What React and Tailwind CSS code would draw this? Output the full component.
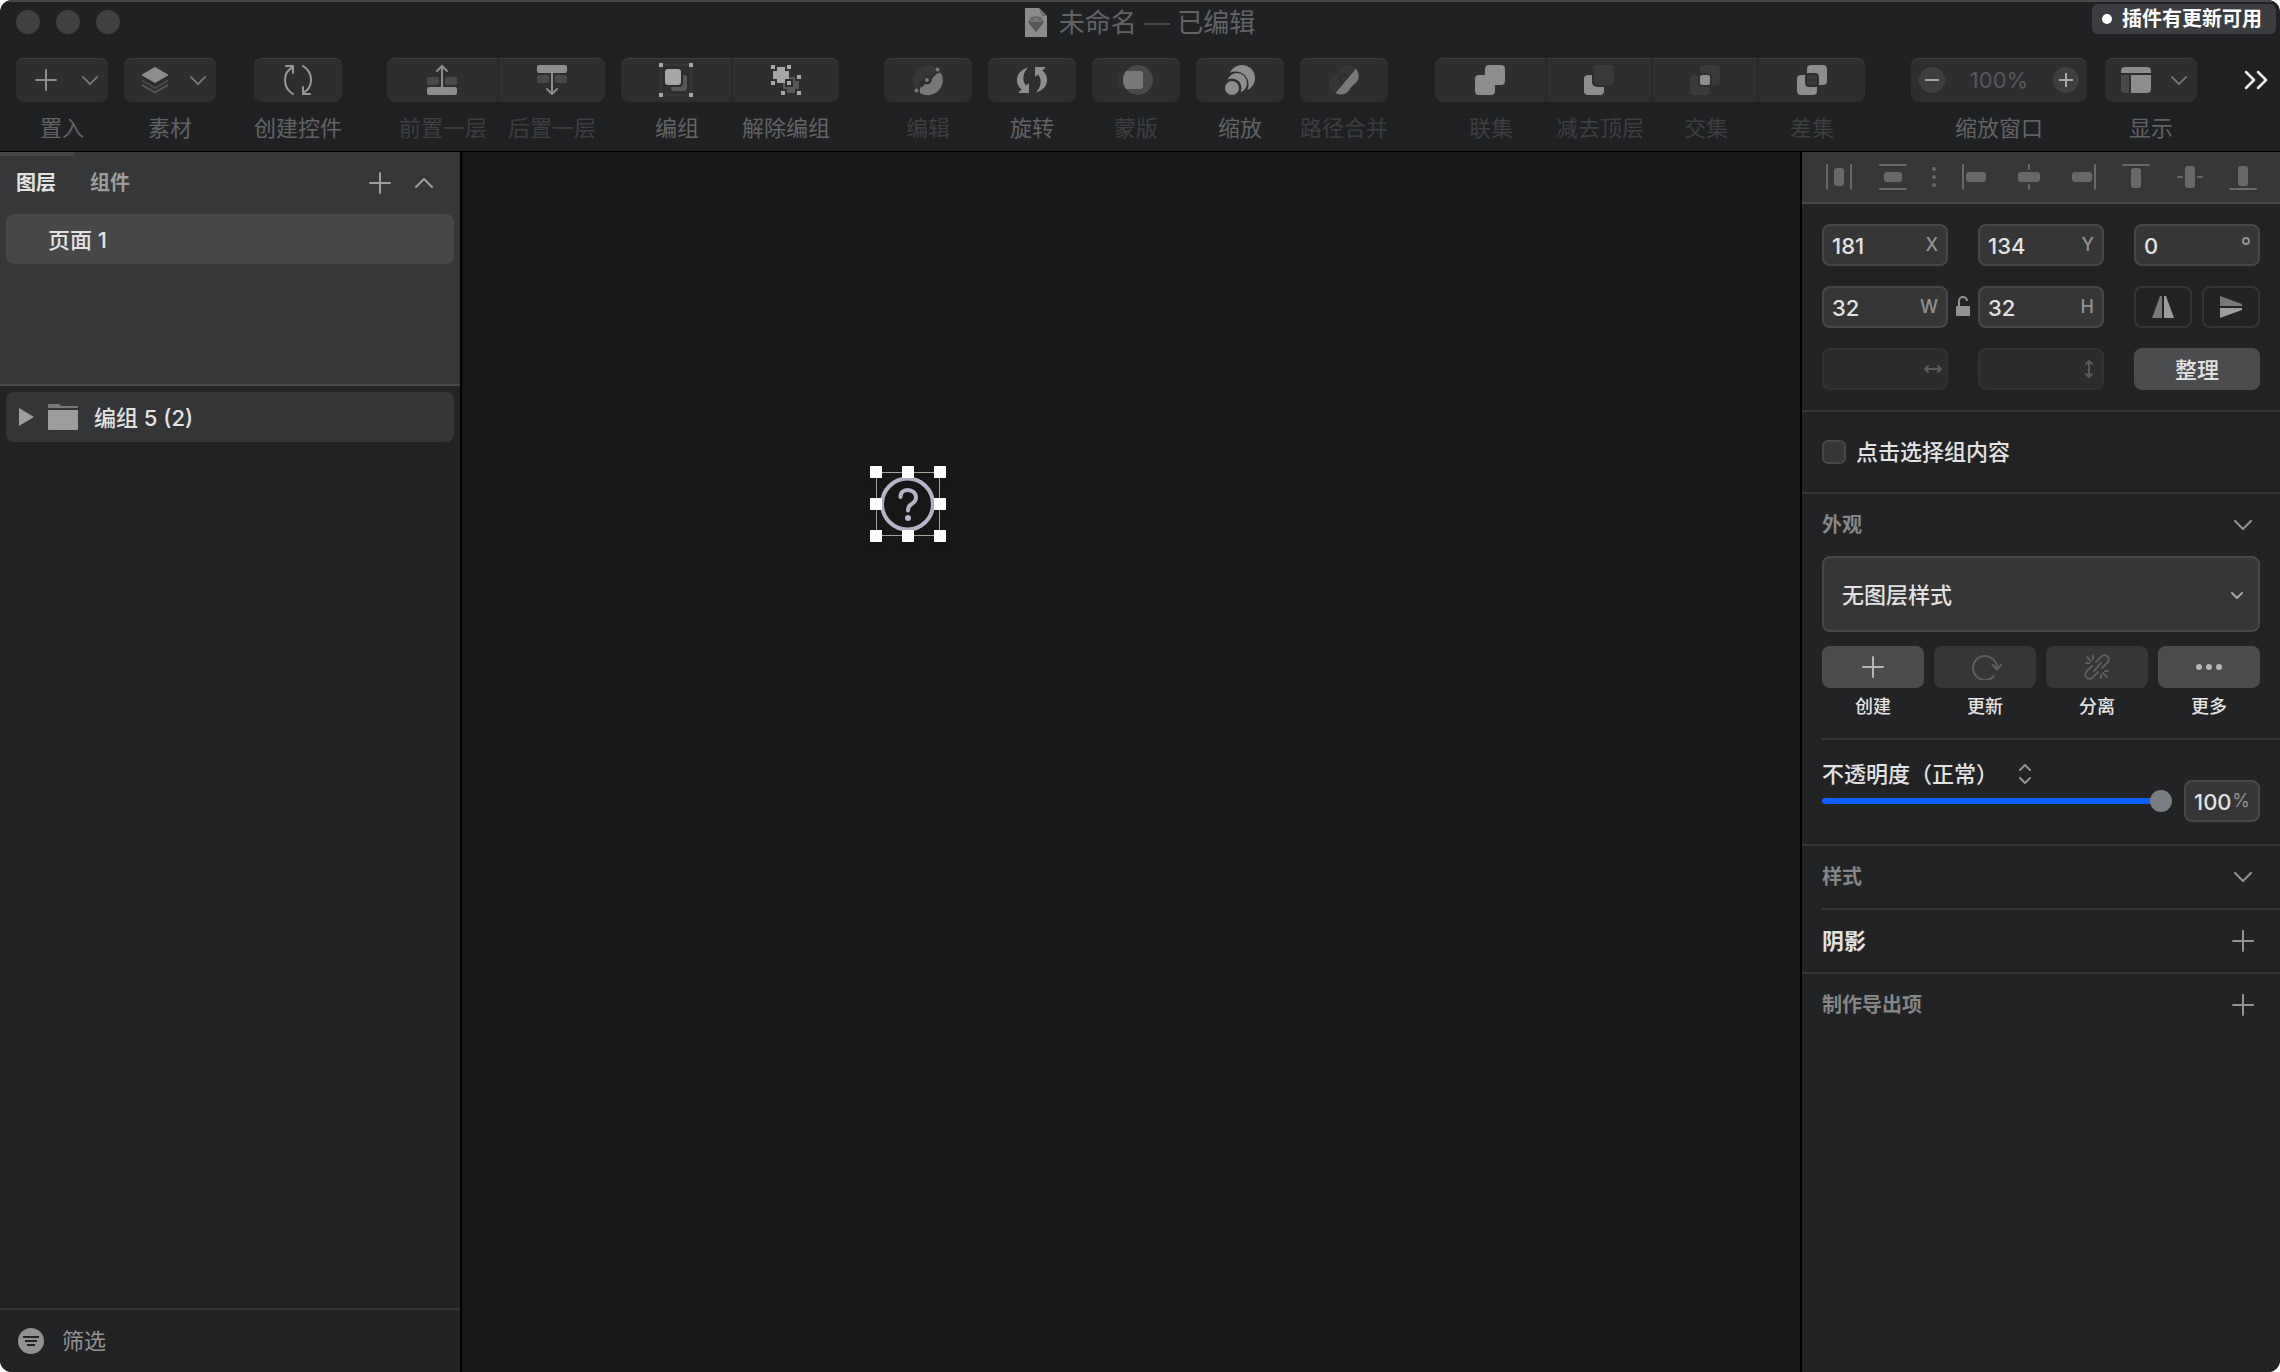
import React from 'react';
import clsx from 'clsx';

const ToolIcon = ({ children, className }) => (
  <svg viewBox="0 0 36 36" className={clsx('size-9 shrink-0', className)} fill="none" aria-hidden="true">
    {children}
  </svg>
);

const Chevron = ({ className, flip = false }) => (
  <svg viewBox="0 0 18 10" className={className} fill="none" stroke="currentColor" strokeWidth="2" strokeLinecap="round" strokeLinejoin="round" aria-hidden="true">
    <path d={flip ? 'M1 9 9 1l8 8' : 'M1 1l8 8 8-8'} />
  </svg>
);

const Plus = ({ className }) => (
  <svg viewBox="0 0 22 22" className={clsx('size-[22px]', className)} stroke="currentColor" strokeWidth="2" strokeLinecap="round" aria-hidden="true">
    <path d="M11 1v20M1 11h20" />
  </svg>
);

const LayersIcon = () => (
  <ToolIcon>
    <path d="M19 5.500 32 13 19 20.500 6 13Z" fill="#8c8d8f" stroke="#8c8d8f" strokeLinejoin="round" />
    <path d="M6 18.500l13 7.500 13-7.500" stroke="#48494b" strokeWidth="1.6" />
    <path d="M6 23l13 7.500L32 23" stroke="#58595b" strokeWidth="1.6" />
  </ToolIcon>
);

const SymbolIcon = () => (
  <ToolIcon>
    <g stroke="#97989a" strokeWidth="2" strokeLinecap="round" strokeLinejoin="round">
      <path d="M6 4h7v7M13 5C7 8 5 13 5 18c0 6 3 11 8 14" />
      <path d="M30 32h-7v-7M23 31c6-3 8-8 8-13 0-6-3-11-8-14" />
    </g>
  </ToolIcon>
);

const ForwardIcon = () => (
  <ToolIcon>
    <rect x="3" y="25" width="30" height="8" rx="2" fill="#8c8d8f" />
    <rect x="3" y="15" width="12" height="8" rx="2" fill="#48494b" />
    <rect x="21" y="15" width="12" height="8" rx="2" fill="#48494b" />
    <path d="M18 26V4M13 9l5-5 5 5" stroke="#8c8d8f" strokeWidth="2" strokeLinecap="round" />
  </ToolIcon>
);

const BackwardIcon = () => (
  <ToolIcon>
    <rect x="3" y="3" width="30" height="8" rx="2" fill="#8c8d8f" />
    <rect x="3" y="13" width="12" height="8" rx="2" fill="#48494b" />
    <rect x="21" y="13" width="12" height="8" rx="2" fill="#48494b" />
    <path d="M18 10v22M13 27l5 5 5-5" stroke="#8c8d8f" strokeWidth="2" strokeLinecap="round" />
  </ToolIcon>
);

const GroupIcon = () => (
  <ToolIcon>
    <rect x="3" y="3" width="30" height="30" stroke="#353638" strokeWidth="2" />
    <path d="M1 1h4v4H1zM31 1h4v4h-4zM1 31h4v4H1zM31 31h4v4h-4z" fill="#a6a7a9" />
    <rect x="13" y="13" width="16" height="16" rx="3" fill="#57585a" />
    <rect x="5" y="5" width="20" height="20" rx="4" fill="#2d2e30" />
    <rect x="7" y="7" width="16" height="16" rx="3" fill="#a6a7a9" />
  </ToolIcon>
);

const UngroupIcon = () => (
  <ToolIcon>
    <path d="M19 15h8v4h4v8h-4v4h-8v-4h-4v-8h4z" fill="#57585a" />
    <path d="M17 17h8v8h-8z" fill="#2d2e30" />
    <path d="M9 5h8v4h4v8h-4v4H9v-4H5V9h4z" fill="#a6a7a9" />
    <path d="M3 3h4v4H3zM19 3h4v4h-4zM3 19h4v4H3zM19 19h4v4h-4z" fill="#a6a7a9" />
    <path d="M29 13h4v4h-4zM13 29h4v4h-4zM29 29h4v4h-4z" fill="#a6a7a9" />
  </ToolIcon>
);

const EditIcon = () => (
  <ToolIcon>
    <circle cx="18" cy="18" r="15" fill="#353638" />
    <path d="M31 11A15 15 0 0 1 10 31V26C12 25 14 24 15 22 19 23 22 21 22 17 23 14 26 11 31 11Z" fill="#77787a" />
    <path d="M27 8c-3 7-7 9-10 10S9 21 7 28" stroke="#2d2e30" strokeWidth="2" />
    <circle cx="17" cy="18" r="4" fill="#2d2e30" />
    <circle cx="27.5" cy="7.5" r="2" fill="#77787a" />
    <circle cx="17" cy="18" r="2" fill="#77787a" />
    <circle cx="6.5" cy="28.5" r="2" fill="#77787a" />
  </ToolIcon>
);

const RotateIcon = () => (
  <ToolIcon>
    <g fill="#8c8d8f">
      <path d="M14 5.500C6 8 3 13 3 18c0 4 1.500 7 4.500 9.500L5 30v1h10V21l-3 2.500C7.500 18 9 11 14 5.500Z" />
      <path d="M14 5.500C6 8 3 13 3 18c0 4 1.500 7 4.500 9.500L5 30v1h10V21l-3 2.500C7.500 18 9 11 14 5.500Z" transform="rotate(180 18 18)" />
    </g>
  </ToolIcon>
);

const MaskIcon = () => (
  <ToolIcon>
    <rect x="1" y="9" width="20" height="18" rx="3" fill="#323335" />
    <circle cx="20" cy="18" r="16" fill="#2d2e30" />
    <circle cx="20" cy="18" r="15" fill="#48494b" />
    <path d="M8 9h14a3 3 0 0 1 3 3v12a3 3 0 0 1-3 3H8c-4-5-4-13 0-18Z" fill="#77787a" />
  </ToolIcon>
);

const ScaleIcon = () => (
  <ToolIcon>
    <circle cx="20" cy="16" r="13" fill="#8c8d8f" />
    <circle cx="13.500" cy="22.500" r="13" fill="#2d2e30" />
    <circle cx="15" cy="21" r="10" fill="#8c8d8f" />
    <circle cx="10" cy="26" r="9.500" fill="#2d2e30" />
    <circle cx="10" cy="26" r="7" fill="#8c8d8f" />
  </ToolIcon>
);

const FlattenIcon = () => (
  <ToolIcon>
    <circle cx="22" cy="14" r="11" fill="#343537" />
    <circle cx="14" cy="22" r="11" fill="#343537" />
    <circle cx="18" cy="17" r="4" stroke="#2b2c2e" strokeWidth="2" />
    <path d="M30 6C35 12 34 19 28 23 25 25 25 27 23 29 19 34 13 34 9 31Z" fill="#77787a" stroke="#2d2e30" />
  </ToolIcon>
);

const UnionIcon = () => (
  <ToolIcon>
    <rect x="13" y="3" width="20" height="20" rx="4" fill="#8c8d8f" />
    <rect x="3" y="13" width="20" height="20" rx="4" fill="#8c8d8f" />
  </ToolIcon>
);

const SubtractIcon = () => (
  <ToolIcon>
    <rect x="3" y="13" width="20" height="20" rx="4" fill="#8c8d8f" />
    <rect x="11" y="1" width="24" height="24" rx="5" fill="#2d2e30" />
    <rect x="13" y="3" width="20" height="20" rx="4" fill="#38393b" />
  </ToolIcon>
);

const IntersectIcon = () => (
  <ToolIcon>
    <rect x="13" y="3" width="20" height="20" rx="4" fill="#38393b" />
    <rect x="3" y="13" width="20" height="20" rx="4" fill="#38393b" />
    <rect x="11" y="11" width="14" height="14" rx="4" fill="#2d2e30" />
    <rect x="13" y="13" width="10" height="10" rx="2" fill="#8c8d8f" />
  </ToolIcon>
);

const DifferenceIcon = () => (
  <ToolIcon>
    <rect x="13" y="3" width="20" height="20" rx="4" fill="#8c8d8f" />
    <rect x="3" y="13" width="20" height="20" rx="4" fill="#8c8d8f" />
    <rect x="11" y="11" width="14" height="14" rx="4" fill="#2d2e30" />
    <rect x="13" y="13" width="10" height="10" rx="3" fill="#38393b" />
  </ToolIcon>
);

const DisplayIcon = () => (
  <ToolIcon>
    <path d="M4 11V9a4 4 0 0 1 4-4h22a4 4 0 0 1 4 4v2Z" fill="#8c8d8f" />
    <path d="M4 13h8v18H8a4 4 0 0 1-4-4Z" fill="#48494b" />
    <path d="M14 13h20v14a4 4 0 0 1-4 4H14Z" fill="#8c8d8f" />
  </ToolIcon>
);

const toolSurface = 'bg-[#2d2e30] shadow-[inset_0_1px_0_#3d3e40]';

const ToolItem = ({ label, icon, dim, menu, className = 'w-[88px]' }) => (
  <div className={clsx('flex flex-col items-center', className)}>
    <button
      type="button"
      aria-label={label}
      className={clsx(
        'flex h-11 w-full items-center rounded-lg',
        toolSurface,
        menu ? 'justify-between pr-2.5 pl-3' : 'justify-center'
      )}
    >
      {icon}
      {menu && <Chevron className="h-[9px] w-4 text-[#77787a]" />}
    </button>
    <span className={clsx('mt-3 text-[22px] leading-7 whitespace-nowrap', dim ? 'text-[#3c3d3f]' : 'text-[#626365]')}>{label}</span>
  </div>
);

const ToolGroup = ({ items, dim, className }) => (
  <div className={clsx('flex', className)}>
    {items.map(({ label, icon }) => (
      <div key={label} className="group flex flex-1 flex-col items-center first:w-[112px] first:flex-none">
        <button
          type="button"
          aria-label={label}
          className={clsx(
            'flex h-11 w-full items-center justify-center border-r-2 border-[#29292b] group-first:rounded-l-lg group-last:rounded-r-lg group-last:border-r-0',
            toolSurface
          )}
        >
          {icon}
        </button>
        <span className={clsx('mt-3 text-[22px] leading-7 whitespace-nowrap', dim ? 'text-[#3c3d3f]' : 'text-[#626365]')}>{label}</span>
      </div>
    ))}
  </div>
);

const orderTools = [
  { label: '前置一层', icon: <ForwardIcon /> },
  { label: '后置一层', icon: <BackwardIcon /> }
];

const groupTools = [
  { label: '编组', icon: <GroupIcon /> },
  { label: '解除编组', icon: <UngroupIcon /> }
];

const booleanTools = [
  { label: '联集', icon: <UnionIcon /> },
  { label: '减去顶层', icon: <SubtractIcon /> },
  { label: '交集', icon: <IntersectIcon /> },
  { label: '差集', icon: <DifferenceIcon /> }
];

const TitleBar = () => (
  <div className="grid h-10 grid-cols-[1fr_auto_1fr] items-center">
    <div className="flex gap-4 pl-4">
      <button type="button" aria-label="关闭" className="size-6 rounded-full bg-[#3f4042]" />
      <button type="button" aria-label="最小化" className="size-6 rounded-full bg-[#3f4042]" />
      <button type="button" aria-label="全屏" className="size-6 rounded-full bg-[#3f4042]" />
    </div>
    <div className="flex items-center gap-3">
      <svg viewBox="0 0 22 30" className="h-[30px] w-[22px]" aria-hidden="true">
        <path d="M0 1h14l8 8v21H0Z" fill="#8b8b8b" />
        <path d="M14 1l8 8h-5z" fill="#6f6f6f" />
        <path d="M6 10l5-1 5 1 3 5-8 10-8-10Z" fill="#6a6a6a" />
        <path d="M3 15h16l-8 10Z" fill="#585858" />
        <path d="M7 15l4-5 4 5Z" fill="#777" />
      </svg>
      <h1 className="pt-0.5 text-[26px] leading-8 text-[#626365]">未命名 <span className="text-[#48494b]">—</span> 已编辑</h1>
    </div>
    <button type="button" className="mt-0.5 mr-1 flex h-[30px] items-center gap-2.5 self-start justify-self-end rounded-md bg-[#3c3d41] pr-3.5 pl-2.5 text-xl font-bold text-white">
      <span className="size-2.5 rounded-full bg-white" />
      插件有更新可用
    </button>
  </div>
);

const Toolbar = () => (
  <div className="flex pt-4 pr-3 pl-4">
    <ToolItem label="置入" menu className="w-[92px]" icon={<span className="flex w-9 justify-center"><Plus className="text-[#8c8d8f]" /></span>} />
    <ToolItem label="素材" menu className="ml-4 w-[92px]" icon={<LayersIcon />} />
    <ToolItem label="创建控件" className="ml-[38px] w-[88px]" icon={<SymbolIcon />} />
    <ToolGroup items={orderTools} dim className="ml-[45px] w-[218px]" />
    <ToolGroup items={groupTools} className="ml-4 w-[218px]" />
    <div className="ml-[45px] flex gap-4">
      <ToolItem label="编辑" dim icon={<EditIcon />} />
      <ToolItem label="旋转" icon={<RotateIcon />} />
      <ToolItem label="蒙版" dim icon={<MaskIcon />} />
      <ToolItem label="缩放" icon={<ScaleIcon />} />
      <ToolItem label="路径合并" dim icon={<FlattenIcon />} />
    </div>
    <ToolGroup items={booleanTools} dim className="ml-[47px] w-[430px]" />
    <div className="ml-[46px] flex w-44 flex-col items-center">
      <div className={clsx('flex h-11 w-full items-center justify-between rounded-lg px-2', toolSurface)}>
        <button type="button" aria-label="缩小" className="flex size-[26px] items-center justify-center rounded-full bg-[#3e3f41]">
          <span className="h-0.5 w-3.5 bg-[#a6a7a9]" />
        </button>
        <span className="text-[22px] text-[#58595b]">100%</span>
        <button type="button" aria-label="放大" className="flex size-[26px] items-center justify-center rounded-full bg-[#3e3f41]">
          <svg viewBox="0 0 14 14" className="size-3.5" stroke="#a6a7a9" strokeWidth="2" aria-hidden="true">
            <path d="M7 0v14M0 7h14" />
          </svg>
        </button>
      </div>
      <span className="mt-3 text-[22px] leading-7 text-[#626365]">缩放窗口</span>
    </div>
    <ToolItem label="显示" menu className="ml-[18px] w-[92px]" icon={<DisplayIcon />} />
    <button type="button" aria-label="更多工具" className="ml-auto flex h-11 items-center">
      <svg viewBox="0 0 24 20" className="h-5 w-6" fill="none" stroke="#f0f0f0" strokeWidth="2.500" strokeLinecap="round" strokeLinejoin="round" aria-hidden="true">
        <path d="M2 2l8 8-8 8M14 2l8 8-8 8" />
      </svg>
    </button>
  </div>
);

const LayerSidebar = () => (
  <aside className="flex w-[462px] shrink-0 flex-col border-r-2 border-black bg-[#222325]">
    <section className="h-[234px] border-b-2 border-[#48494b] bg-[#363738]">
      <div className="h-1 w-[74px] bg-[#464748]" />
      <div className="mb-1 flex h-[54px] items-center pr-[27px] pl-4 text-xl font-bold">
        <button type="button" className="text-[#e2e2e2]">图层</button>
        <button type="button" className="ml-[34px] text-[#9c9d9d]">组件</button>
        <button type="button" aria-label="添加页面" className="ml-auto text-[#9c9d9d]"><Plus /></button>
        <button type="button" aria-label="收起页面列表" className="ml-6 text-[#9c9d9d]"><Chevron flip className="h-2.5 w-[18px]" /></button>
      </div>
      <button type="button" className="mx-1.5 flex h-[50px] w-[448px] items-center rounded-lg bg-[#464749] pt-0.5 pl-[42px] text-[22px] font-medium text-[#e2e2e2]">
        页面 1
      </button>
    </section>
    <div className="flex-1 px-1.5 pt-1.5">
      <button type="button" className="flex h-[50px] w-full items-center rounded-lg bg-[#343537] pl-3 text-[22px] font-medium text-[#e2e2e2]">
        <svg viewBox="0 0 16 18" className="h-[18px] w-4" fill="#9c9d9d" aria-hidden="true">
          <path d="M1 0l15 9-15 9Z" />
        </svg>
        <svg viewBox="0 0 30 26" className="ml-3.5 h-[26px] w-[30px]" aria-hidden="true">
          <path d="M0 4V1a1 1 0 0 1 1-1h10l2 2h16a1 1 0 0 1 1 1v1Z" fill="#77787a" />
          <path d="M0 6h30v19a1 1 0 0 1-1 1H1a1 1 0 0 1-1-1Z" fill="#9c9d9d" />
        </svg>
        <span className="ml-4 pt-0.5">编组 5 (2)</span>
      </button>
    </div>
    <label className="flex h-16 items-center gap-[18px] border-t-2 border-[#343537] pl-[18px]">
      <svg viewBox="0 0 26 26" className="size-[26px]" aria-hidden="true">
        <circle cx="13" cy="13" r="13" fill="#929292" />
        <path d="M5 9h16M7 13h12M9 17h8" stroke="#222325" strokeWidth="2" />
      </svg>
      <input type="text" aria-label="筛选图层" placeholder="筛选" className="min-w-0 flex-1 bg-transparent text-[22px] text-[#e2e2e2] outline-none placeholder:text-[#929292]" />
    </label>
  </aside>
);

const handles = [[0, 0], [32, 0], [64, 0], [0, 32], [64, 32], [0, 64], [32, 64], [64, 64]];

const Canvas = () => (
  <main className="relative min-w-0 flex-1 bg-[#161817]">
    <svg viewBox="0 0 76 76" className="absolute top-[314px] left-[408px] size-[76px] overflow-visible" fill="none" role="img" aria-label="帮助图标">
      <circle cx="37.500" cy="38" r="25.500" stroke="#b6b4c6" strokeWidth="4" />
      <path d="M30.500 31C30.500 26 34 24 38 24s8 3 8 7.500c0 4-2.500 5.500-5 7-2 1.200-3 2.500-3 6" stroke="#b6b4c6" strokeWidth="4" strokeLinecap="round" />
      <circle cx="38" cy="52" r="3" fill="#b6b4c6" />
      <rect x="6.500" y="6.500" width="63" height="63" stroke="#a3a3a3" />
      {handles.map(([x, y]) => (
        <rect key={`${x}-${y}`} x={x} y={y} width="12" height="12" fill="#fff" className="drop-shadow-sm" />
      ))}
    </svg>
  </main>
);

const alignTools = [
  { label: '水平分布', lines: 'M2 1v24M26 1v24', rect: [9, 4, 10, 18] },
  { label: '垂直分布', lines: 'M1 1h26M1 25h26', rect: [5, 8, 18, 10] },
  { label: '左对齐', lines: 'M1 1v24', rect: [4, 8, 20, 10] },
  { label: '水平居中', lines: 'M14 1v4M14 21v4', rect: [3, 8, 22, 10] },
  { label: '右对齐', lines: 'M26 1v24', rect: [3, 8, 20, 10] },
  { label: '顶对齐', lines: 'M1 1h26', rect: [9, 4, 10, 20] },
  { label: '垂直居中', lines: 'M2 13h4M22 13h4', rect: [9, 2, 10, 22] },
  { label: '底对齐', lines: 'M1 25h26', rect: [9, 2, 10, 20] }
];

const AlignBar = () => (
  <div className="flex h-[52px] items-center justify-between border-b-2 border-[#464748] bg-[#363738] px-[23px]">
    {alignTools.map(({ label, lines, rect: [x, y, w, h] }, i) => (
      <React.Fragment key={label}>
        <button type="button" aria-label={label}>
          <svg viewBox="0 0 28 26" className="block h-[26px] w-7" aria-hidden="true">
            <path d={lines} stroke="#676868" strokeWidth="2" strokeLinecap="round" />
            <rect x={x} y={y} width={w} height={h} rx="3" fill="#676868" />
          </svg>
        </button>
        {i === 1 && (
          <svg viewBox="0 0 4 20" className="h-5 w-1" fill="#676868" aria-hidden="true">
            <circle cx="2" cy="2" r="2" />
            <circle cx="2" cy="10" r="2" />
            <circle cx="2" cy="18" r="2" />
          </svg>
        )}
      </React.Fragment>
    ))}
  </div>
);

const Field = ({ name, value, suffix, disabled }) => (
  <label
    className={clsx(
      'flex h-[42px] min-w-0 items-center rounded-lg border-2 px-2',
      disabled ? 'border-[#313232] bg-[#2b2c2c]' : 'border-[#474747] bg-[#363636]'
    )}
  >
    <input type="text" aria-label={name} defaultValue={value} disabled={disabled} className="w-0 min-w-0 flex-1 bg-transparent pt-0.5 text-[22px] font-medium text-[#e2e2e2] outline-none" />
    <span className="text-lg font-medium text-[#929292]">{suffix}</span>
  </label>
);

const ArrowSpan = ({ vertical }) => (
  <svg viewBox="0 0 18 18" className={clsx('-mr-1 size-[18px]', vertical && 'rotate-90')} fill="none" stroke="#585959" strokeWidth="2" strokeLinecap="round" strokeLinejoin="round" aria-hidden="true">
    <path d="M1 9h16M4 6 1 9l3 3M14 6l3 3-3 3" />
  </svg>
);

const GeometryPanel = () => (
  <section className="grid grid-cols-3 gap-x-[30px] gap-y-5 border-b-2 border-[#343537] p-5">
    <Field name="X 坐标" value="181" suffix="X" />
    <Field name="Y 坐标" value="134" suffix="Y" />
    <Field name="旋转角度" value="0" suffix={<svg viewBox="0 0 8 18" className="h-[18px] w-2 overflow-visible" fill="none" aria-hidden="true"><circle cx="4" cy="5" r="3" stroke="#929292" strokeWidth="2" /></svg>} />
    <div className="relative grid">
      <Field name="宽度" value="32" suffix="W" />
      <button type="button" aria-label="锁定比例" className="absolute top-2.5 -right-[22px]">
        <svg viewBox="0 0 14 20" className="h-5 w-3.5" fill="none" aria-hidden="true">
          <rect y="10" width="14" height="10" rx="1" fill="#929292" />
          <path d="M3 10V5a4 4 0 0 1 8 0" stroke="#929292" strokeWidth="2" />
        </svg>
      </button>
    </div>
    <Field name="高度" value="32" suffix="H" />
    <div className="grid grid-cols-2 gap-2.5">
      <button type="button" aria-label="水平翻转" className="flex h-[42px] items-center justify-center rounded-lg border-2 border-[#343537]">
        <svg viewBox="0 0 22 22" className="size-[22px]" aria-hidden="true">
          <path d="M10 0v22H0L8 0Z" fill="#77787a" />
          <path d="M12 0v22h10L14 0Z" fill="#9c9d9d" />
        </svg>
      </button>
      <button type="button" aria-label="垂直翻转" className="flex h-[42px] items-center justify-center rounded-lg border-2 border-[#343537]">
        <svg viewBox="0 0 22 22" className="size-[22px]" aria-hidden="true">
          <path d="M0 10h22V8L0 0Z" fill="#77787a" />
          <path d="M0 12h22v2L0 22Z" fill="#9c9d9d" />
        </svg>
      </button>
    </div>
    <Field name="水平间距" disabled suffix={<ArrowSpan />} />
    <Field name="垂直间距" disabled suffix={<ArrowSpan vertical />} />
    <button type="button" className="h-[42px] rounded-lg bg-[#4b4c4e] pt-0.5 text-[22px] font-medium text-[#e2e2e2]">整理</button>
  </section>
);

const styleActions = [
  { label: '创建', icon: <Plus className="text-[#b4b5b6]" /> },
  {
    label: '更新',
    dim: true,
    icon: (
      <svg viewBox="0 0 30 26" className="ml-1 h-[26px] w-[30px]" fill="none" stroke="#5c5d5f" strokeWidth="2" strokeLinecap="round" strokeLinejoin="round" aria-hidden="true">
        <path d="M22 22A12 12 0 1 1 25 15M20.500 11l4.500 4.500 4-4.500" />
      </svg>
    )
  },
  {
    label: '分离',
    dim: true,
    icon: (
      <svg viewBox="0 0 26 26" className="size-[26px]" fill="none" stroke="#5c5d5f" strokeWidth="2" strokeLinecap="round" aria-hidden="true">
        <path d="M12 8 17.500 2.500a4 4 0 0 1 6 6L18 14M14 18 8.500 23.500a4 4 0 0 1-6-6L8 12M10 17l7-8" />
        <path d="M9 2v3M3 3l4 4M2 9h3M17 21v3M19 19l4 4M21 17h3" />
      </svg>
    )
  },
  {
    label: '更多',
    icon: (
      <svg viewBox="0 0 26 6" className="h-1.5 w-[26px]" fill="#b4b5b6" aria-hidden="true">
        <circle cx="3" cy="3" r="3" />
        <circle cx="13" cy="3" r="3" />
        <circle cx="23" cy="3" r="3" />
      </svg>
    )
  }
];

const AppearancePanel = () => (
  <section className="pl-5">
    <div className="flex h-[62px] items-center justify-between pr-7">
      <h2 className="text-xl font-bold text-[#858686]">外观</h2>
      <button type="button" aria-label="收起外观"><Chevron className="h-2.5 w-[18px] text-[#929292]" /></button>
    </div>
    <div className="relative mr-5">
      <select aria-label="图层样式" className="h-[76px] w-full appearance-none rounded-lg border-2 border-[#474747] bg-[#363636] px-[18px] pt-0.5 text-[22px] font-medium text-[#e2e2e2]">
        <option>无图层样式</option>
      </select>
      <svg viewBox="0 0 14 9" className="pointer-events-none absolute top-[35px] right-4 h-[9px] w-3.5" fill="none" stroke="#a6a7a9" strokeWidth="2" strokeLinecap="round" strokeLinejoin="round" aria-hidden="true">
        <path d="M2 2l5 5 5-5" />
      </svg>
    </div>
    <div className="mt-3.5 mr-5 grid grid-cols-4 gap-2.5 pb-[18px]">
      {styleActions.map(({ label, icon, dim }) => (
        <div key={label} className="flex flex-col items-center">
          <button type="button" aria-label={label} disabled={dim} className={clsx('flex h-[42px] w-full items-center justify-center rounded-lg', dim ? 'bg-[#353638]' : 'bg-[#4b4c4e]')}>
            {icon}
          </button>
          <span className="mt-1.5 text-lg leading-[26px] font-medium text-[#e2e2e2]">{label}</span>
        </div>
      ))}
    </div>
    <div className="flex h-[106px] gap-3 border-t-2 border-[#343537] pr-5">
      <div className="flex flex-1 flex-col pt-[18px]">
        <div className="relative self-start">
          <select aria-label="混合模式" className="block h-7 w-[216px] appearance-none bg-transparent text-[22px] font-medium text-[#e2e2e2]">
            <option>不透明度（正常）</option>
          </select>
          <svg viewBox="0 0 14 20" className="pointer-events-none absolute top-1.5 right-1.5 h-5 w-3.5" fill="none" stroke="#929292" strokeWidth="2" strokeLinecap="round" strokeLinejoin="round" aria-hidden="true">
            <path d="M2 6l5-5 5 5M2 14l5 5 5-5" />
          </svg>
        </div>
        <input
          type="range"
          aria-label="不透明度"
          defaultValue={100}
          className="mt-1 block h-[22px] w-full appearance-none bg-transparent [&::-webkit-slider-runnable-track]:h-1.5 [&::-webkit-slider-runnable-track]:rounded-full [&::-webkit-slider-runnable-track]:bg-[#0b60ff] [&::-webkit-slider-thumb]:-mt-2 [&::-webkit-slider-thumb]:size-[22px] [&::-webkit-slider-thumb]:appearance-none [&::-webkit-slider-thumb]:rounded-full [&::-webkit-slider-thumb]:bg-[#7b7d84]"
        />
      </div>
      <label className="mt-10 flex h-[42px] w-[76px] items-center rounded-lg border-2 border-[#474747] bg-[#363636] px-2">
        <input type="text" aria-label="不透明度数值" defaultValue="100" className="w-0 min-w-0 flex-1 bg-transparent pt-0.5 text-[22px] font-medium text-[#e2e2e2] outline-none" />
        <span className="text-lg text-[#929292]">%</span>
      </label>
    </div>
  </section>
);

const SectionRow = ({ title, strong, collapsible }) => (
  <div className="flex h-[62px] items-center justify-between">
    <h2 className={clsx('font-bold', strong ? 'text-[22px] text-[#e2e2e2]' : 'text-xl text-[#858686]')}>{title}</h2>
    <button type="button" aria-label={title} className="flex w-[22px] justify-center text-[#929292]">
      {collapsible ? <Chevron className="h-2.5 w-[18px]" /> : <Plus />}
    </button>
  </div>
);

const Inspector = () => (
  <aside className="w-[480px] shrink-0 border-l-2 border-black bg-[#222325]">
    <AlignBar />
    <GeometryPanel />
    <label className="flex h-[82px] items-center gap-2.5 border-b-2 border-[#343537] pl-5 text-[22px] font-medium text-[#e2e2e2]">
      <input type="checkbox" className="size-6 appearance-none rounded-md border-2 border-[#474747] bg-[#363636]" />
      点击选择组内容
    </label>
    <AppearancePanel />
    <div className="border-t-2 border-[#343537] pl-5">
      <div className="border-b-2 border-[#343537] pr-[26px]">
        <SectionRow title="样式" collapsible />
      </div>
      <div className="pr-[26px]">
        <SectionRow title="阴影" strong />
      </div>
    </div>
    <div className="border-t-2 border-[#343537] pr-[26px] pl-5">
      <SectionRow title="制作导出项" />
    </div>
  </aside>
);

export default function App() {
  return (
    <div className="min-h-screen bg-white font-['Inter','Noto_Sans_CJK_SC',sans-serif]">
      <div className="flex min-h-screen flex-col overflow-hidden rounded-xl bg-[#202123]">
        <header className="h-[152px] border-t-2 border-b border-t-[#47484a] border-b-black">
          <TitleBar />
          <Toolbar />
        </header>
        <div className="flex flex-1">
          <LayerSidebar />
          <Canvas />
          <Inspector />
        </div>
      </div>
    </div>
  );
}
